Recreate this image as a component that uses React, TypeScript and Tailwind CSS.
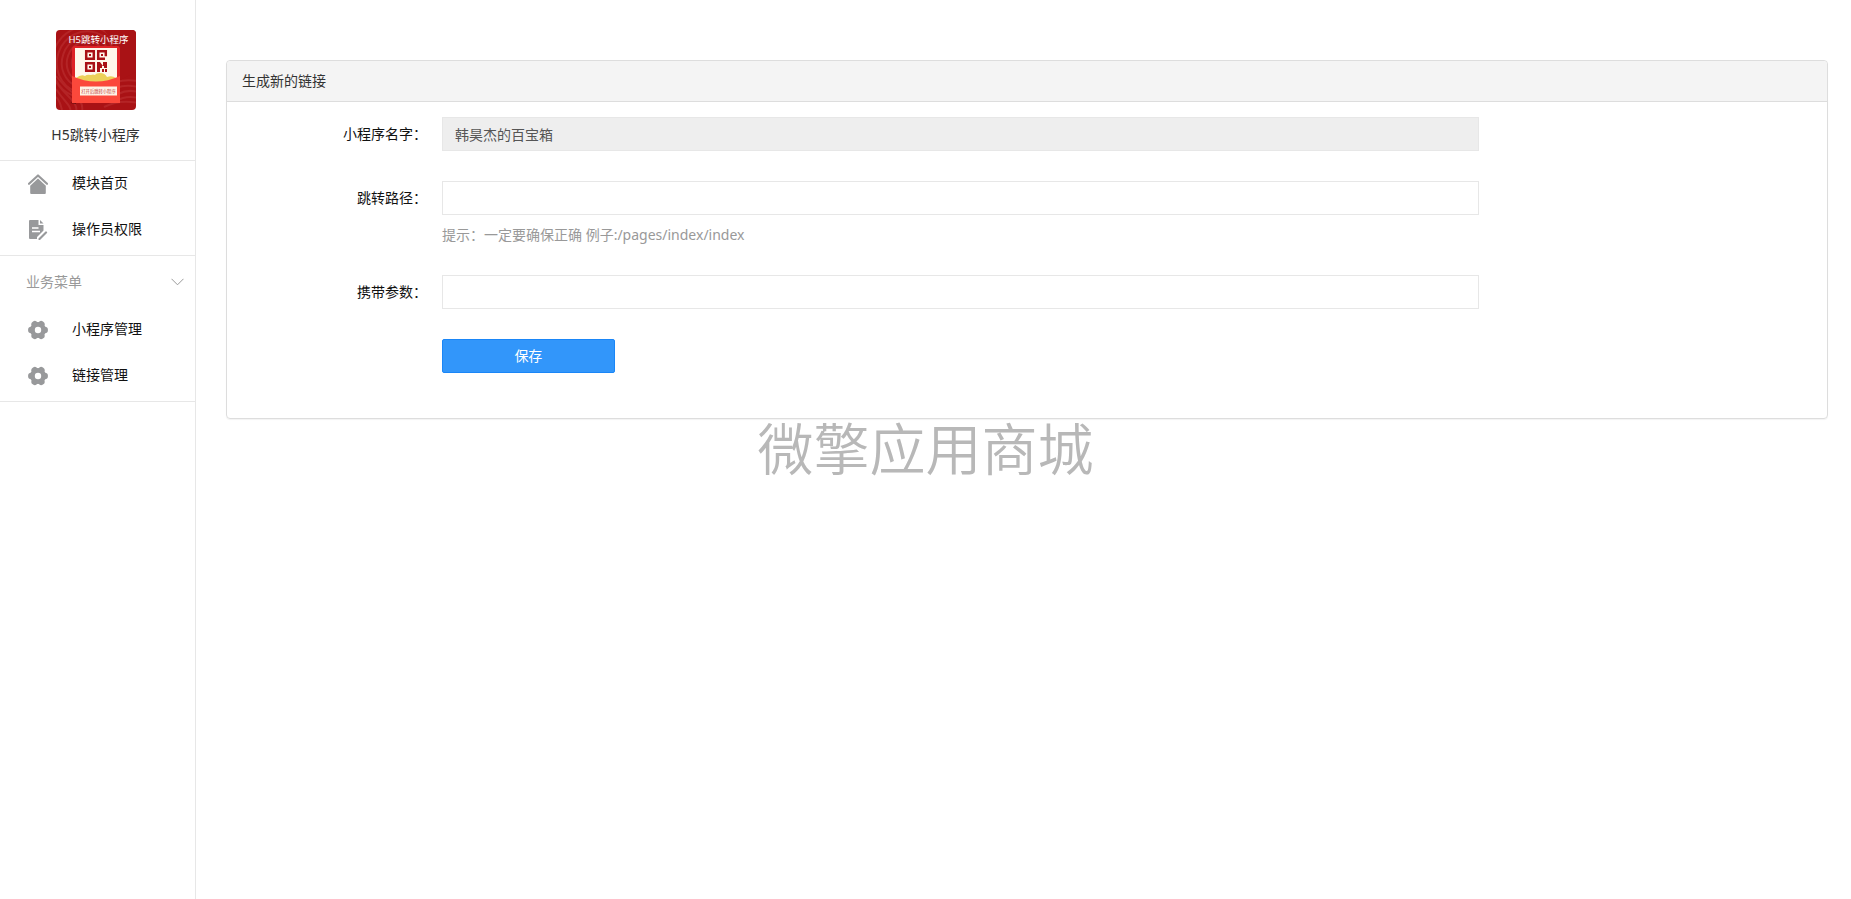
import type { ReactNode } from "react";

const swirls = [14, 19, 24, 29, 34];

function Logo() {
  return (
    <svg viewBox="0 0 80 80" className="w-20 h-20 rounded" role="img" aria-label="H5跳转小程序">
      <rect width="80" height="80" fill="#a91215" />
      <g fill="none" stroke="#b42426" strokeWidth="2">
        {swirls.map((r) => (
          <ellipse key={r} cx="30" cy="32" rx={r} ry={r + 2} transform="rotate(20 30 32)" />
        ))}
        <path d="M0 52q6 8 14 16t6 14M0 59q4 6 10 13t4 10M0 67q4 4 6 13M0 46q8 10 18 18t8 18" />
        <path d="M60 52q10-3 22-1M60 58q10-4 22-1M62 64q10-5 20-2M60 71q10-6 22-3M48 77q16-8 34-4" />
      </g>
      <path d="M48 0h32v42L64 50V20z" fill="#a91215" />
      <path d="M14 73l6-2v3z" fill="#6d0a0c" />
      <rect x="16" y="16" width="48" height="57" rx="3" fill="#de2326" />
      <rect x="19" y="18" width="42" height="34" fill="#fff8ea" />
      <path d="M20 48q5-4 9-2 2-2 6-1 2-1 4 0 1-2 5-2 5 0 7 4 5-2 9 1v5H20z" fill="#ecd159" />
      <path d="M16 46q24 11 48 0v27H16z" fill="#fb483b" />
      <g fill="none" stroke="#a91215" strokeWidth="2.5">
        <path d="M30.2 21.2h7.6v7.6h-7.6zM30.2 33.2h7.6v7.6h-7.6z" />
        <path d="M49 28.8h-6.800v-7.600h7.600v5" />
      </g>
      <g fill="#a91215">
        <path d="M33 24h2v2h-2zM33 36h2v2h-2zM45 24h2v2h-2z" />
        <path d="M41 32h3l3 4v-4h4v6h-3v-2h-2v2h-2v4h-3zM46 39h2v3h-2zM49 39h2v3h-2z" />
      </g>
      <rect x="24" y="56.5" width="37" height="9" fill="#fff3e6" />
      <text x="42.5" y="12.5" textAnchor="middle" fontSize="9.5" fill="#fff">
        H5跳转小程序
      </text>
      <text x="42.5" y="62.7" textAnchor="middle" fontSize="4.3" fill="#c2403a">
        打开后跳转小程序
      </text>
    </svg>
  );
}

function HomeIcon() {
  return (
    <svg viewBox="0 0 20 20" className="w-5 h-5" fill="#98999b">
      <path d="M1 9.8L10 1.500l9 8.300" fill="none" stroke="#98999b" strokeWidth="2.2" strokeLinecap="round" strokeLinejoin="round" />
      <path d="M10 4.500l7.800 7.200v7.300a1 1 0 0 1-1 1H3.200a1 1 0 0 1-1-1v-7.300z" />
    </svg>
  );
}

function DocIcon() {
  return (
    <svg viewBox="0 0 20 20" className="w-5 h-5" fill="#98999b">
      <path d="M2 0h8.500v5h5v5.500L9 17v2H2a1 1 0 0 1-1-1V1a1 1 0 0 1 1-1z" />
      <path d="M12 0l3.500 3.600H12z" />
      <path d="M4 8h6.500M4 11.500h8" stroke="#fff" strokeWidth="1.5" />
      <path d="M18 12.500L11.500 19" stroke="#98999b" strokeWidth="2.2" strokeLinecap="round" />
    </svg>
  );
}

function GearIcon() {
  return (
    <svg viewBox="0 0 20 20" className="w-5 h-5">
      <g stroke="#98999b" strokeWidth="6.5" strokeLinecap="round">
        <path d="M3.300 10h13.400" />
        <path d="M3.300 10h13.400" transform="rotate(60 10 10)" />
        <path d="M3.300 10h13.400" transform="rotate(120 10 10)" />
      </g>
      <circle cx="10" cy="10" r="8" fill="#98999b" />
      <circle cx="10" cy="10" r="3.2" fill="#fff" />
    </svg>
  );
}

function MenuItem({ icon, children }: { icon: ReactNode; children: ReactNode }) {
  return (
    <li>
      <a href="#" className="flex items-center h-[46px] pl-7 gap-6 text-[#111]">
        {icon}
        <span className="pb-0.5">{children}</span>
      </a>
    </li>
  );
}

function Field({ id, label, value, hint }: { id: string; label: string; value?: string; hint?: string }) {
  return (
    <div className="flex mb-[30px]">
      <label htmlFor={id} className="w-[200px] h-[34px] leading-[34px] shrink-0 text-right text-[#111]">
        {label}
      </label>
      <div className="w-2/3 px-[15px]">
        <input
          id={id}
          type="text"
          defaultValue={value}
          disabled={!!value}
          className="block w-full h-[34px] px-3 border border-[#e7e7e7] text-[#555] disabled:bg-[#eee]"
        />
        {hint && <p className="mt-[10px] leading-5 text-[#999]">{hint}</p>}
      </div>
    </div>
  );
}

export default function App() {
  return (
    <div className="flex min-h-screen bg-white text-sm text-[#333] font-['Noto_Sans','Noto_Sans_CJK_SC',sans-serif]">
      <aside className="w-[196px] shrink-0 border-r border-[#e7e7e7]">
        <div className="flex flex-col items-center h-[161px] pt-[30px] pr-1 border-b border-[#e7e7e7]">
          <Logo />
          <p className="mt-[15px] leading-5">H5跳转小程序</p>
        </div>
        <ul className="h-[95px] border-b border-[#e7e7e7]">
          <MenuItem icon={<HomeIcon />}>模块首页</MenuItem>
          <MenuItem icon={<DocIcon />}>操作员权限</MenuItem>
        </ul>
        <div className="border-b border-[#e7e7e7]">
          <button type="button" className="flex items-center justify-between w-full h-[51px] pl-[26px] pr-[11px] text-[#999]">
            业务菜单
            <svg viewBox="0 0 13 8" className="w-[13px] h-2" fill="none" stroke="#999">
              <path d="M.5.8l6 6 6-6" />
            </svg>
          </button>
          <ul className="pb-0.5">
            <MenuItem icon={<GearIcon />}>小程序管理</MenuItem>
            <MenuItem icon={<GearIcon />}>链接管理</MenuItem>
          </ul>
        </div>
      </aside>

      <main className="flex-1 pt-[60px] pl-[30px] pr-[23px]">
        <section className="border border-[#ddd] rounded shadow-[0_1px_1px_rgba(0,0,0,0.05)]">
          <h1 className="h-[41px] px-[15px] leading-10 rounded-t bg-[#f4f4f4] border-b border-[#ddd]">生成新的链接</h1>
          <form className="pt-[15px] pb-[45px]">
            <Field id="name" label="小程序名字：" value="韩昊杰的百宝箱" />
            <Field id="path" label="跳转路径：" hint="提示：一定要确保正确 例子:/pages/index/index" />
            <Field id="params" label="携带参数：" />
            <div className="w-2/3 ml-[200px] px-[15px]">
              <button type="button" className="w-1/6 h-[34px] rounded-xs border border-[#1a86f7] bg-[#3296fa] text-white">
                保存
              </button>
            </div>
          </form>
        </section>
      </main>

      {/* watermark */}
      <div className="fixed inset-0 flex items-center justify-center pb-2 pointer-events-none">
        <span className="text-[56px] leading-none font-[350] text-[#b8b8b8] font-['Noto_Sans_CJK_SC',sans-serif]">微擎应用商城</span>
      </div>
    </div>
  );
}
